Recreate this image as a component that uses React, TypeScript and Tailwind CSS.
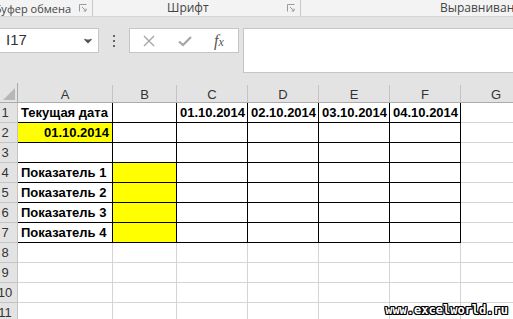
import { ChevronDown } from "lucide-react";

const cols = ["A", "B", "C", "D", "E", "F", "G"];

// widths of columns A..G, in pixels
const colW = ["w-[95px]", "w-[64px]", "w-[71px]", "w-[71px]", "w-[71px]", "w-[71px]", "w-[71px]"];

type CellData = {
  text?: string;
  right?: boolean;
  yellow?: boolean;
};

const rows: CellData[][] = [
  [{ text: "Текущая дата" }, {}, { text: "01.10.2014" }, { text: "02.10.2014" }, { text: "03.10.2014" }, { text: "04.10.2014" }],
  [{ text: "01.10.2014", right: true, yellow: true }],
  [],
  [{ text: "Показатель 1" }, { yellow: true }],
  [{ text: "Показатель 2" }, { yellow: true }],
  [{ text: "Показатель 3" }, { yellow: true }],
  [{ text: "Показатель 4" }, { yellow: true }],
  [],
  [],
  [],
  [],
];

const Launcher = () => (
  <svg width="8" height="8" viewBox="0 0 8 8" className="shrink-0">
    <path d="M0.5 7.5V0.5H7.5" fill="none" stroke="#9a9a9a" strokeWidth="1" />
    <path d="M3 3L7 7M7 4.5V7H4.5" fill="none" stroke="#9a9a9a" strokeWidth="1" />
  </svg>
);

const Ribbon = () => (
  <div className="flex h-[17px] bg-[#f3f3f3] border-b border-[#d5d5d5] text-[12px] text-[#444] font-['Open_Sans',sans-serif] leading-none">
    <div className="w-[93px] shrink-0 flex items-center justify-end pr-[5px] gap-[8px] border-r border-[#c8c8c8] overflow-hidden">
      <span className="whitespace-nowrap text-[11px]">Буфер обмена</span>
      <Launcher />
    </div>
    <div className="w-[208px] shrink-0 flex items-center border-r border-[#c8c8c8]">
      <span className="ml-[74px]">Шрифт</span>
      <span className="ml-auto mr-[5px]">
        <Launcher />
      </span>
    </div>
    <div className="flex-1 flex items-center pl-[139px] whitespace-nowrap overflow-hidden">Выравнивание</div>
  </div>
);

const FormulaBar = () => (
  <div className="flex items-start h-[66px] bg-[#e3e3e3] pt-[11px]">
    <div className="w-[100px] -ml-px h-[25px] shrink-0 bg-white border border-[#c6c6c6] flex items-center pl-[6px] pr-[4px]">
      <span className="text-[15px] text-[#333] font-['Liberation_Sans',sans-serif]">I17</span>
      <ChevronDown className="ml-auto w-[12px] h-[12px] text-[#555]" strokeWidth={3} fill="#555" />
    </div>
    <div className="w-[30px] h-[25px] shrink-0 flex flex-col items-center justify-center gap-[3px]">
      <span className="w-[2px] h-[2px] bg-[#666]" />
      <span className="w-[2px] h-[2px] bg-[#666]" />
      <span className="w-[2px] h-[2px] bg-[#666]" />
    </div>
    <div className="w-[110px] h-[25px] shrink-0 bg-white border border-[#c6c6c6] flex items-center">
      <svg width="12" height="12" viewBox="0 0 12 12" className="ml-[13px]">
        <path d="M1 1L11 11M11 1L1 11" stroke="#a6a6a6" strokeWidth="1.4" />
      </svg>
      <svg width="14" height="12" viewBox="0 0 14 12" className="ml-[23px]">
        <path d="M1 6.5L5 10L13 2" fill="none" stroke="#a6a6a6" strokeWidth="2.2" />
      </svg>
      <span className="ml-[22px] text-[16px] italic text-[#555] font-['Liberation_Serif',serif] leading-none">
        f<span className="text-[12px]">x</span>
      </span>
    </div>
    <div className="ml-[4px] flex-1 h-[45px] bg-white border border-[#c6c6c6] border-r-0" />
  </div>
);

const Cell = ({ data, bordered, col }: { data: CellData; bordered: boolean; col: number }) => (
  <div
    className={[
      colW[col],
      "h-[20px] shrink-0 border-r border-b flex items-center px-[3px] overflow-visible whitespace-nowrap",
      bordered ? "border-black" : "border-[#d4d4d4]",
      data.yellow ? "bg-[#ffff00]" : "bg-white",
      data.right ? "justify-end" : "justify-start",
    ].join(" ")}
  >
    {data.text && <span className="font-bold text-[13px] text-black">{data.text}</span>}
  </div>
);

const Sheet = () => (
  <div className="flex flex-col font-['Liberation_Sans',sans-serif]">
    <div className="flex h-[20px] bg-[#e3e3e3] border-b border-[#ababab]">
      <div className="w-[18px] shrink-0 relative border-r border-[#ababab]">
        <svg width="12" height="12" viewBox="0 0 12 12" className="absolute right-[2px] bottom-[2px]">
          <path d="M12 0V12H0Z" fill="#b7b7b7" />
        </svg>
      </div>
      {cols.map((c, i) => (
        <div
          key={c}
          className={[colW[i], "shrink-0 border-r border-[#c4c4c4] flex items-center justify-center text-[13px] text-[#333] pt-[3px] mt-[2px]"].join(" ")}
        >
          {c}
        </div>
      ))}
    </div>
    {rows.map((r, ri) => (
      <div key={ri} className="flex">
        <div className="w-[18px] h-[20px] shrink-0 bg-[#e3e3e3] border-r border-b border-[#c4c4c4] flex items-center justify-center pr-[7px] text-[13px] text-[#333]">
          {ri + 1}
        </div>
        {cols.map((c, ci) => (
          <Cell key={c} col={ci} data={r[ci] ?? {}} bordered={ri < 7 && ci < 6} />
        ))}
      </div>
    ))}
  </div>
);

export default function App() {
  return (
    <div className="relative w-[513px] h-[319px] overflow-hidden bg-white">
      <Ribbon />
      <FormulaBar />
      <Sheet />
      <div className="absolute right-[5px] bottom-[3px] text-[12px] font-bold text-white font-['DejaVu_Sans_Mono',monospace] leading-none [text-shadow:1px_1px_0_#000,-1px_-1px_0_#000,1px_-1px_0_#000,-1px_1px_0_#000,0_1px_0_#000,0_-1px_0_#000,1px_0_0_#000,-1px_0_0_#000]">
        www.excelworld.ru
      </div>
    </div>
  );
}
